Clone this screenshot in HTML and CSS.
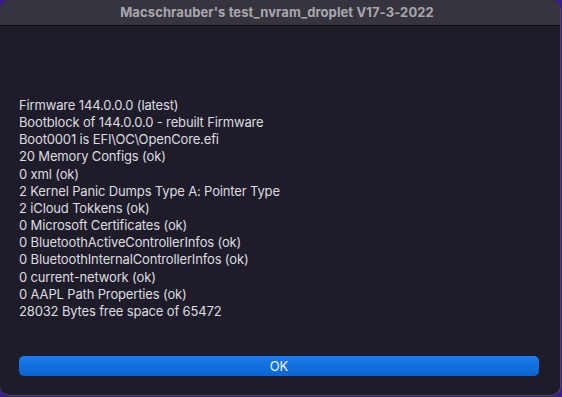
FILE: index.html
```html
<!DOCTYPE html>
<html lang="en">

<head>
    <meta charset="UTF-8">
    <meta name="viewport" content="width=device-width, initial-scale=1.0">
    <title>test_nvram_droplet</title>
    <link rel="stylesheet" href="styles.css">
</head>

<body>
    <div class="window">

        <!-- title bar -->
        <div class="titlebar">Macschrauber's test_nvram_droplet V17-3-2022</div>

        <!-- nvram report -->
        <div class="content">
            <div class="report">
                <div>Firmware 144.0.0.0 (latest)</div>
                <div>Bootblock of 144.0.0.0 - rebuilt Firmware</div>
                <div>Boot0001 is EFI\OC\OpenCore.efi</div>
                <div>20 Memory Configs (ok)</div>
                <div>0 xml (ok)</div>
                <div>2 Kernel Panic Dumps Type A: Pointer Type</div>
                <div>2 iCloud Tokkens (ok)</div>
                <div>0 Microsoft Certificates (ok)</div>
                <div>0 BluetoothActiveControllerInfos (ok)</div>
                <div>0 BluetoothInternalControllerInfos (ok)</div>
                <div>0 current-network (ok)</div>
                <div>0 AAPL Path Properties (ok)</div>
                <div>28032 Bytes free space of 65472</div>
            </div>

            <!-- default button -->
            <button class="ok-button" type="button">OK</button>
        </div>

    </div>
</body>

</html>
```

FILE: styles.css
```css
body {
    margin: 0;
    background: #3b1d8c; /* desktop behind the window */
    font-family: Inter, "Noto Sans", sans-serif;
}

.window {
    width: 560px;
    height: 395px;
    background: #1f1c29;
    border-right: 1px solid #4c4a52;
    border-bottom: 1px solid #4c4a52;
    border-radius: 10px;
    overflow: hidden;
    display: flex;
    flex-direction: column;
}

.titlebar {
    height: 25px;
    line-height: 25px;
    background: #37343d;
    border-bottom: 1px solid #08070b;
    color: #a9a7ae;
    font-size: 13px;
    font-weight: 700;
    letter-spacing: 0.1px;
    text-align: center;
    padding-right: 6px;
}

.content {
    flex: 1;
    display: flex;
    flex-direction: column;
    padding: 71px 21px 0 19px;
}

.report {
    color: #dddce0;
    font-size: 13px;
    line-height: 17.15px;
    letter-spacing: -0.15px;
}

.ok-button {
    margin-top: 36px;
    height: 20px;
    padding: 0;
    border: none;
    border-radius: 5px;
    background: linear-gradient(#1a7cef, #0c64d2);
    color: #f2f6fd;
    font-family: Inter, "Noto Sans", sans-serif;
    font-size: 13px;
    line-height: 20px;
    cursor: pointer;
}

.ok-button:focus {
    outline: none;
}
```
